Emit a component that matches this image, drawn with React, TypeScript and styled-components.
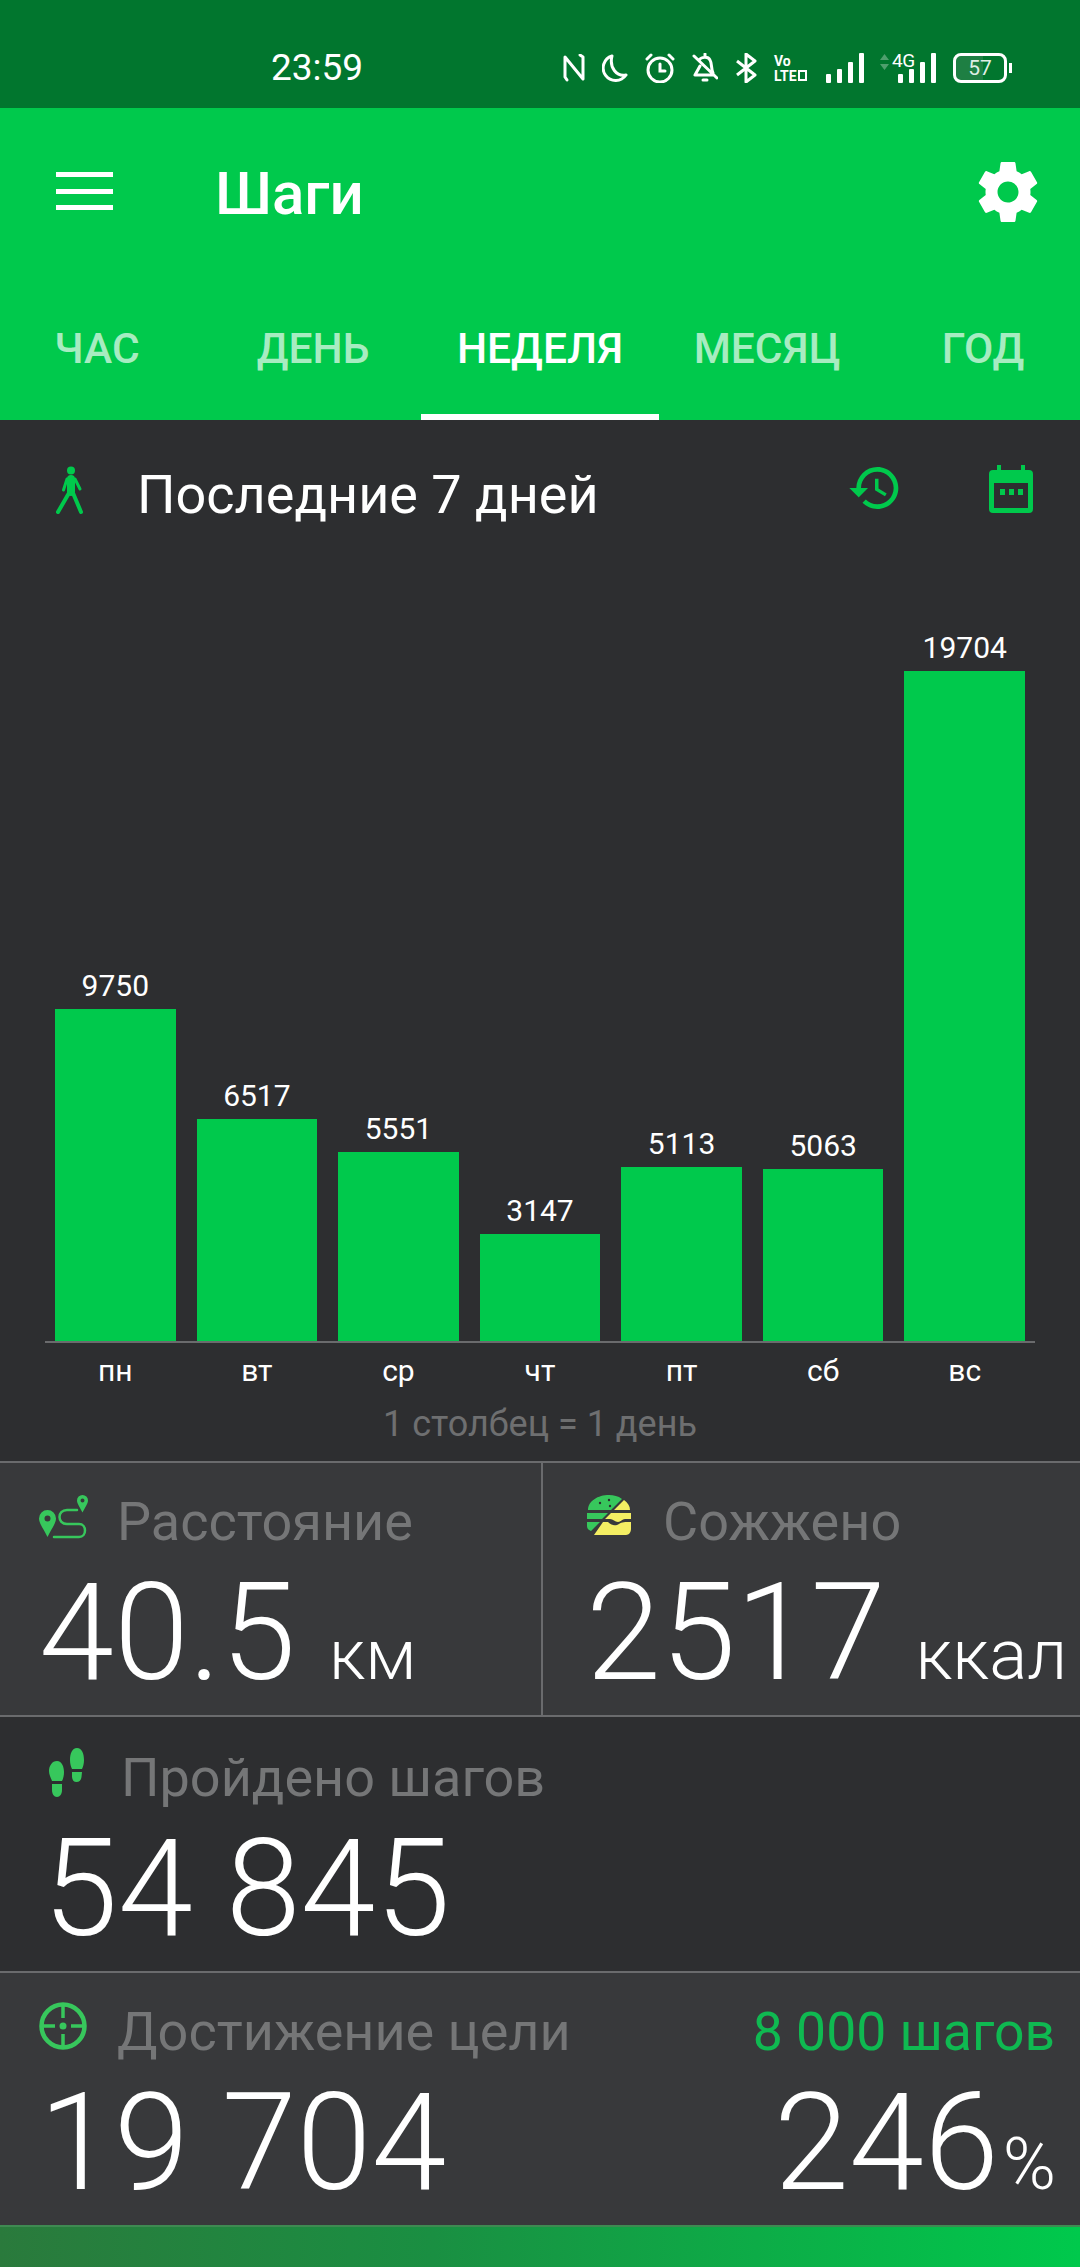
import React from 'react';
import styled, { createGlobalStyle } from 'styled-components';

const GREEN = '#00c94c';
const ICON_GREEN = '#37c75c';

const GlobalStyle = createGlobalStyle`
  html, body { margin: 0; padding: 0; background: #2d2e30; }
  * { box-sizing: border-box; }
  body { font-family: Roboto, "Noto Sans", sans-serif; }
`;

const Page = styled.div`
  width: 1080px;
  height: 2267px;
  display: flex;
  flex-direction: column;
  background: #2d2e30;
  overflow: hidden;
`;

/* статус-бар */
const StatusBar = styled.div`
  height: 108px;
  flex: none;
  display: flex;
  align-items: center;
  padding: 28px 0 0 271px;
  background: #01762e;
  color: #fff;
`;

const Clock = styled.span`
  width: 292px;
  font-size: 37px;
  line-height: 40px;
`;

const StatusIcons = styled.div`
  display: flex;
  align-items: center;
  gap: 17px;
`;

const VoLte = styled.span`
  display: flex;
  flex-direction: column;
  gap: 1px;
  width: 35px;
  font-size: 14px;
  line-height: 14px;
  font-weight: 700;
  white-space: nowrap;
`;

const LteBox = styled.i`
  display: inline-block;
  width: 9px;
  height: 11px;
  margin-left: 1px;
  border: 2px solid #fff;
`;

const Network = styled.span`
  position: relative;
  width: 57px;
  height: 30px;
  margin-left: -2px;
  display: flex;
  justify-content: flex-end;
`;

const FourG = styled.span`
  position: absolute;
  left: 13px;
  top: -2px;
  font-size: 19px;
  line-height: 20px;
  letter-spacing: -0.5px;
`;

const DataArrows = styled.svg`
  position: absolute;
  left: 1px;
  top: 1px;
`;

const Battery = styled.span`
  position: relative;
  width: 54px;
  height: 30px;
  border: 3px solid #fff;
  border-radius: 8px;
  display: flex;
  align-items: center;
  justify-content: center;
  font-size: 21px;
  color: #dfeee4;
  background: linear-gradient(90deg, #1e7f43 57%, transparent 57%);

  &::after {
    content: '';
    position: absolute;
    right: -8px;
    top: 7px;
    width: 3px;
    height: 10px;
    background: #fff;
  }
`;

/* шапка */
const Header = styled.header`
  height: 312px;
  flex: none;
  display: flex;
  flex-direction: column;
  background: ${GREEN};
`;

const TopRow = styled.div`
  height: 192px;
  display: flex;
  align-items: flex-start;
  padding: 48px 36px 0 56px;
  color: #fff;
`;

const Burger = styled.div`
  width: 57px;
  height: 38px;
  margin-top: 16px;
  display: flex;
  flex-direction: column;
  justify-content: space-between;

  i {
    display: block;
    height: 5px;
    background: #fff;
  }
`;

const Title = styled.h1`
  flex: 1;
  margin: 0 0 0 102px;
  font-size: 60px;
  line-height: 76px;
  font-weight: 500;
`;

const Tabs = styled.nav`
  height: 120px;
  display: grid;
  grid-template-columns: 194px 238px 216px 238px 194px;
`;

const Tab = styled.div<{ $active?: boolean }>`
  position: relative;
  text-align: center;
  padding-top: 25px;
  font-size: 42.5px;
  line-height: 48px;
  font-weight: 500;
  white-space: nowrap;
  color: ${p => (p.$active ? '#fff' : 'rgba(255, 255, 255, 0.66)')};

  ${p =>
    p.$active &&
    `&::after {
      content: '';
      position: absolute;
      left: -11px;
      right: -11px;
      bottom: 0;
      height: 6px;
      background: #fff;
    }`}
`;

/* график */
const Period = styled.div`
  height: 114px;
  flex: none;
  display: flex;
  align-items: flex-start;
  padding: 46px 47px 0 56px;
  color: #fff;
`;

const PeriodTitle = styled.div`
  flex: 1;
  margin: -3px 0 0 53px;
  font-size: 54px;
  line-height: 64px;
`;

const PeriodActions = styled.div`
  display: flex;
  gap: 86px;
  align-items: flex-start;

  svg:first-child {
    margin-top: -6px;
  }

  svg:last-child {
    margin-top: -1px;
  }
`;

const Chart = styled.section`
  height: 809px;
  flex: none;
  margin: 0 45px;
  padding: 0 10px;
  display: grid;
  grid-template-columns: repeat(7, 1fr);
  gap: 21px;
  border-bottom: 2px solid #6a6b6d;
`;

const BarColumn = styled.div`
  display: flex;
  flex-direction: column;
  justify-content: flex-end;
  align-items: stretch;
`;

const BarValue = styled.span`
  color: #fff;
  font-size: 30px;
  line-height: 36px;
  margin-bottom: 5px;
  text-align: center;
`;

const Bar = styled.div`
  background: ${GREEN};
`;

const Days = styled.div`
  height: 57px;
  flex: none;
  margin: 0 45px;
  padding: 8px 10px 0;
  display: grid;
  grid-template-columns: repeat(7, 1fr);
  gap: 21px;
  color: #fff;
  font-size: 30px;
  line-height: 40px;
  text-align: center;
`;

const Legend = styled.div`
  height: 61px;
  flex: none;
  padding-top: 2px;
  text-align: center;
  font-size: 36px;
  line-height: 44px;
  color: #6e6f70;
`;

/* карточки */
const StatRow = styled.div<{ $light?: boolean; $height: number }>`
  height: ${p => p.$height}px;
  flex: none;
  display: flex;
  border-top: 2px solid #6a6b6d;
  background: ${p => (p.$light ? '#38393b' : '#2d2e30')};
`;

const Stat = styled.div<{ $width?: number; $left: number; $top: number; $divider?: boolean }>`
  ${p => (p.$width ? `width: ${p.$width}px; flex: none;` : 'flex: 1;')}
  padding: ${p => p.$top}px 0 0 ${p => p.$left}px;
  min-width: 0;
  ${p => p.$divider && 'border-right: 2px solid #6a6b6d;'}
`;

const StatHead = styled.div`
  display: flex;
  align-items: flex-start;
  height: 66px;
`;

const StatIcon = styled.span<{ $width: number; $left: number; $top: number }>`
  width: ${p => p.$width}px;
  margin-left: ${p => p.$left}px;
  padding-top: ${p => p.$top}px;
  flex: none;
  display: flex;
`;

const StatLabel = styled.span`
  color: #757677;
  font-size: 54px;
  line-height: 60px;
  white-space: nowrap;
`;

const GoalText = styled.span`
  margin-left: auto;
  padding-right: 25px;
  color: #0fb951;
  font-size: 53.5px;
  line-height: 60px;
  white-space: nowrap;
`;

const StatValue = styled.div<{ $end?: boolean }>`
  display: flex;
  align-items: baseline;
  justify-content: ${p => (p.$end ? 'flex-end' : 'flex-start')};
  height: 150px;
  color: #fff;
  font-weight: 300;
  font-size: 135px;
  line-height: 150px;
  white-space: nowrap;
  ${p => p.$end && 'padding-right: 24px;'}
`;

const Unit = styled.span<{ $gap: number; $size: number }>`
  margin-left: ${p => p.$gap}px;
  font-size: ${p => p.$size}px;
`;

const GoalValues = styled.div`
  display: grid;
  grid-template-columns: 1fr auto;
`;

const BottomBar = styled.div`
  flex: 1;
  border-top: 2px solid #3f8a52;
  background: linear-gradient(90deg, #2a7a3c 0%, #1a8f42 40%, #00c94c 100%);
`;

const Nfc = () => (
  <svg width="22" height="28" viewBox="0 0 22 28" fill="none" stroke="#fff" strokeWidth="3" strokeLinecap="round" strokeLinejoin="round">
    <path d="M4 26 2 23V3l18 22V3l-3-2" />
  </svg>
);

const Moon = () => (
  <svg width="26" height="28" viewBox="0 0 26 28" fill="none" stroke="#fff" strokeWidth="3" strokeLinejoin="round">
    <path d="M10 2a12.500 12.500 0 1 0 14 19C15 23 7 14 10 2Z" />
  </svg>
);

const Alarm = () => (
  <svg width="30" height="30" viewBox="0 0 30 30" fill="none" stroke="#fff" strokeWidth="3" strokeLinecap="round">
    <circle cx="15" cy="17" r="12" />
    <path d="M15 11v7h5M2 6l4-4M28 6l-4-4" />
  </svg>
);

const BellOff = () => (
  <svg width="26" height="30" viewBox="0 0 26 30" fill="none" stroke="#fff" strokeWidth="3" strokeLinejoin="round" strokeLinecap="round">
    <path d="M13 1v3M7 7c2-3 9-4 11 0 2 3 1 9 3 13M8 13 3 22h19M2 3l23 22" />
    <path d="M11 27h4" />
  </svg>
);

const Bluetooth = () => (
  <svg width="22" height="30" viewBox="0 0 22 30" fill="none" stroke="#fff" strokeWidth="3" strokeLinejoin="round">
    <path d="m2 8 18 14-9 7V1l9 7L2 22" />
  </svg>
);

const Signal = () => (
  <svg width="38" height="30" viewBox="0 0 38 30" fill="#fff">
    <rect x="0" y="21" width="5" height="9" rx="1" />
    <rect x="11" y="16" width="5" height="14" rx="1" />
    <rect x="22" y="9" width="5" height="21" rx="1" />
    <rect x="33" y="0" width="5" height="30" rx="1" />
  </svg>
);

const Settings = () => (
  <svg width="72" height="72" viewBox="0 0 24 24" fill="#fff">
    <path d="M19.43 12.98c.04-.32.07-.64.07-.98s-.03-.66-.07-.98l2.11-1.65c.19-.15.24-.42.12-.64l-2-3.46c-.12-.22-.39-.3-.61-.22l-2.49 1c-.52-.4-1.08-.73-1.69-.98l-.38-2.65C14.46 2.18 14.25 2 14 2h-4c-.25 0-.46.18-.49.42l-.38 2.65c-.61.25-1.17.59-1.69.98l-2.49-1c-.23-.09-.49 0-.61.22l-2 3.46c-.13.22-.07.49.12.64l2.11 1.65c-.04.32-.07.65-.07.98s.03.66.07.98l-2.11 1.65c-.19.15-.24.42-.12.64l2 3.46c.12.22.39.3.61.22l2.49-1c.52.4 1.08.73 1.69.98l.38 2.65c.03.24.24.42.49.42h4c.25 0 .46-.18.49-.42l.38-2.65c.61-.25 1.17-.59 1.69-.98l2.49 1c.23.09.49 0 .61-.22l2-3.46c.12-.22.07-.49-.12-.64l-2.11-1.65zM12 15.500c-1.930 0-3.500-1.570-3.500-3.500s1.570-3.500 3.500-3.500 3.500 1.570 3.500 3.500-1.570 3.500-3.500 3.500z" />
  </svg>
);

const Walker = () => (
  <svg width="28" height="48" viewBox="0 0 28 48" fill="none" stroke={GREEN} strokeLinecap="round" strokeLinejoin="round">
    <circle cx="15" cy="4.500" r="4" fill={GREEN} stroke="none" />
    <path d="M15 13v13" strokeWidth="8" />
    <path d="M11 13 7.500 24M19 13l5 10" strokeWidth="3" />
    <path d="M13 27 2 46M17 27l8 19" strokeWidth="4" />
  </svg>
);

const History = () => (
  <svg width="56" height="56" viewBox="0 0 24 24" fill={GREEN}>
    <path d="M13 3a9 9 0 0 0-9 9H1l3.890 3.890.07.14L9 12H6c0-3.870 3.130-7 7-7s7 3.130 7 7-3.130 7-7 7c-1.930 0-3.680-.79-4.940-2.060l-1.420 1.420C8.270 19.990 10.510 21 13 21c4.970 0 9-4.030 9-9s-4.030-9-9-9zm-1 5v5l4.280 2.540.72-1.210-3.500-2.080V8H12z" />
  </svg>
);

const CalendarIcon = () => (
  <svg width="44" height="48" viewBox="0 0 44 48">
    <path fill={GREEN} d="M8 0h4v5h20V0h4v5h4a4 4 0 0 1 4 4v35a4 4 0 0 1-4 4H4a4 4 0 0 1-4-4V9a4 4 0 0 1 4-4h4z" />
    <rect x="5" y="18" width="34" height="25" fill="#2d2e30" />
    <path fill={GREEN} d="M11 24h5v6h-5zM20 24h5v6h-5zM29 24h5v6h-5z" />
  </svg>
);

const RouteIcon = () => (
  <svg width="50" height="44" viewBox="0 0 50 44" fill="none">
    <path fill={ICON_GREEN} fillRule="evenodd" d="M8.500 15a8.500 8.500 0 0 1 8.500 8.500c0 5-5 11-8.500 18.500C5 34.500 0 28.500 0 23.500A8.500 8.500 0 0 1 8.500 15Zm0 5.500a3 3 0 1 0 0 6 3 3 0 0 0 0-6Z" />
    <path fill={ICON_GREEN} fillRule="evenodd" d="M43.500 0a5.500 5.500 0 0 1 5.500 5.500c0 3-3 7-5.500 12-2.500-5-5.500-9-5.500-12A5.500 5.500 0 0 1 43.500 0Zm0 3.500a2 2 0 1 0 0 4 2 2 0 0 0 0-4Z" />
    <path stroke={ICON_GREEN} strokeWidth="2.500" strokeLinecap="round" d="M38 15H28c-10 0-10 14 0 14h12c8 0 8 13 0 13H15" />
  </svg>
);

const BurgerIcon = () => (
  <svg width="46" height="40" viewBox="0 0 46 40">
    <path fill={ICON_GREEN} d="M2 15C2 6 12 0 23 0c5 0 9 1 13 4L25 15zM1 18h21l-6 6H1zM1 27h13l-9 9c-3-1-4-3-4-5z" />
    <path fill="#f4ee63" d="M38 5c4 3 6 6 6 10H28zM25 18h20v6h-6c-3 0-4 3-7 3s-5-3-8-3h-5zM17 27h5c4 4 8 4 11 2 3-2 6-2 12-2v7c0 3-2 6-5 6H8z" />
    <circle cx="14" cy="8" r="1.200" fill="#2d2e30" />
    <circle cx="23" cy="5" r="1.200" fill="#2d2e30" />
    <circle cx="24" cy="11" r="1.200" fill="#2d2e30" />
  </svg>
);

const FeetIcon = () => (
  <svg width="36" height="50" viewBox="0 0 36 50" fill={ICON_GREEN}>
    <path d="M8 13c5 0 7 6 7 11 0 4-1 7-2 9H3c-1-3-3-6-3-10 0-5 3-10 8-10zM3 36h10v6c0 4-2 7-5 7s-5-3-5-7z" />
    <path d="M28 0c5 0 7 6 7 12 0 4-1 7-2 9H23c-1-2-2-5-2-9 0-6 2-12 7-12zM23 24h10l-.5 5c-.5 3-2 5-5 5s-4-2-4.500-5z" />
  </svg>
);

const TargetIcon = () => (
  <svg width="48" height="48" viewBox="0 0 48 48" fill="none" stroke={ICON_GREEN} strokeWidth="4.500">
    <circle cx="24" cy="24" r="21.500" />
    <path d="M24 3v13M24 32v13M3 24h13M32 24h13" strokeWidth="3.500" />
    <circle cx="24" cy="24" r="3.500" fill={ICON_GREEN} stroke="none" />
  </svg>
);

const tabs = ['ЧАС', 'ДЕНЬ', 'НЕДЕЛЯ', 'МЕСЯЦ', 'ГОД'];

const days = [
  { day: 'пн', steps: 9750 },
  { day: 'вт', steps: 6517 },
  { day: 'ср', steps: 5551 },
  { day: 'чт', steps: 3147 },
  { day: 'пт', steps: 5113 },
  { day: 'сб', steps: 5063 },
  { day: 'вс', steps: 19704 },
];

const App: React.FC = () => {
  return (
    <Page>
      <GlobalStyle />
      <StatusBar>
        <Clock>23:59</Clock>
        <StatusIcons>
          <Nfc />
          <Moon />
          <Alarm />
          <BellOff />
          <Bluetooth />
          <VoLte>
            <span>Vo</span>
            <span>
              LTE
              <LteBox />
            </span>
          </VoLte>
          <Signal />
          <Network>
            <DataArrows width="9" height="16" viewBox="0 0 9 16" fill="#4f9f6d">
              <path d="M4.500 0 9 6H0zM4.500 16 0 10h9z" />
            </DataArrows>
            <FourG>4G</FourG>
            <Signal />
          </Network>
          <Battery>57</Battery>
        </StatusIcons>
      </StatusBar>

      <Header>
        <TopRow>
          <Burger>
            <i />
            <i />
            <i />
          </Burger>
          <Title>Шаги</Title>
          <Settings />
        </TopRow>
        <Tabs>
          {tabs.map(t => (
            <Tab key={t} $active={t === 'НЕДЕЛЯ'}>
              {t}
            </Tab>
          ))}
        </Tabs>
      </Header>

      <Period>
        <Walker />
        <PeriodTitle>Последние 7 дней</PeriodTitle>
        <PeriodActions>
          <History />
          <CalendarIcon />
        </PeriodActions>
      </Period>

      <Chart>
        {days.map(d => (
          <BarColumn key={d.day}>
            <BarValue>{d.steps}</BarValue>
            <Bar style={{ height: (d.steps / 19704) * 670 }} />
          </BarColumn>
        ))}
      </Chart>
      <Days>
        {days.map(d => (
          <span key={d.day}>{d.day}</span>
        ))}
      </Days>
      <Legend>1 столбец = 1 день</Legend>

      <StatRow $light $height={254}>
        <Stat $width={543} $left={39} $top={29} $divider>
          <StatHead>
            <StatIcon $width={78} $left={0} $top={3}>
              <RouteIcon />
            </StatIcon>
            <StatLabel>Расстояние</StatLabel>
          </StatHead>
          <StatValue>
            40.5
            <Unit $gap={33} $size={70}>км</Unit>
          </StatValue>
        </Stat>
        <Stat $left={43} $top={29}>
          <StatHead>
            <StatIcon $width={77} $left={0} $top={3}>
              <BurgerIcon />
            </StatIcon>
            <StatLabel>Сожжено</StatLabel>
          </StatHead>
          <StatValue>
            2517
            <Unit $gap={30} $size={71}>ккал</Unit>
          </StatValue>
        </Stat>
      </StatRow>

      <StatRow $height={256}>
        <Stat $left={43} $top={31}>
          <StatHead>
            <StatIcon $width={72} $left={6} $top={0}>
              <FeetIcon />
            </StatIcon>
            <StatLabel>Пройдено шагов</StatLabel>
          </StatHead>
          <StatValue>54 845</StatValue>
        </Stat>
      </StatRow>

      <StatRow $light $height={254}>
        <Stat $left={39} $top={29}>
          <StatHead>
            <StatIcon $width={78} $left={0} $top={0}>
              <TargetIcon />
            </StatIcon>
            <StatLabel>Достижение цели</StatLabel>
            <GoalText>8 000 шагов</GoalText>
          </StatHead>
          <GoalValues>
            <StatValue>19 704</StatValue>
            <StatValue $end>
              246
              <Unit $gap={4} $size={72}>%</Unit>
            </StatValue>
          </GoalValues>
        </Stat>
      </StatRow>
      <BottomBar />
    </Page>
  );
};

export default App;
